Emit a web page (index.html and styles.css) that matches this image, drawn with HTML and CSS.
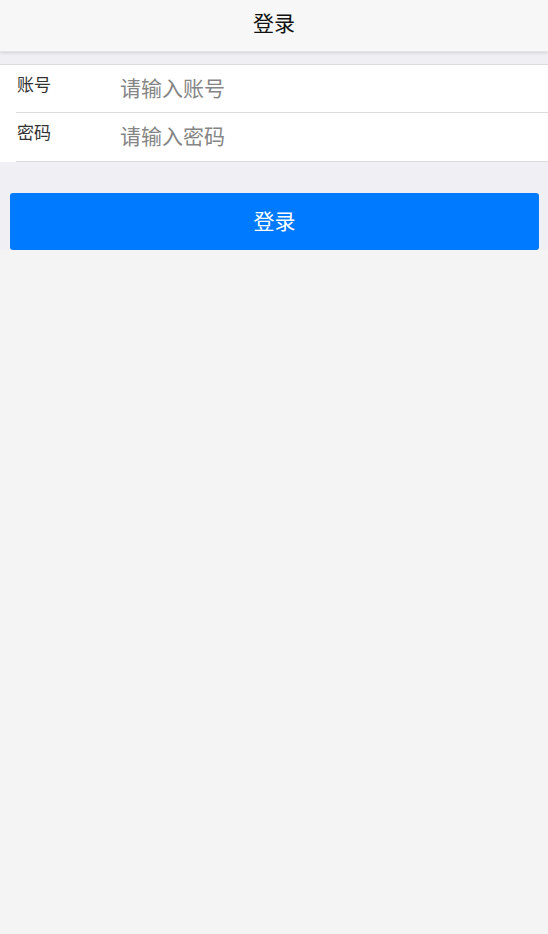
FILE: index.html
```html
<!DOCTYPE html>
<html lang="zh">
<head>
<meta charset="utf-8">
<title>登录</title>
<link rel="stylesheet" href="styles.css">
</head>
<body>
<header class="bar"><h1 class="title">登录</h1></header>
<main class="content">
  <div class="list">
    <div class="row">
      <label class="label">账号</label>
      <input class="field" type="text" placeholder="请输入账号">
    </div>
    <div class="row">
      <label class="label">密码</label>
      <input class="field" type="password" placeholder="请输入密码">
    </div>
  </div>
  <div class="actions">
    <button class="btn" type="button">登录</button>
  </div>
</main>
</body>
</html>
```
FILE: styles.css
```css
* { box-sizing: border-box; }
html, body { margin: 0; padding: 0; }
body {
  background: #f4f4f5;
  font-family: "Noto Sans CJK SC", "Noto Sans", sans-serif;
  width: 548px;
  min-height: 934px;
}
.bar {
  height: 52px;
  background: #f7f7f7;
  box-shadow: 0 1px 3px rgba(0,0,0,0.12);
  border-bottom: 1px solid #e4e4e4;
  display: flex;
  align-items: center;
  justify-content: center;
  position: relative;
  z-index: 1;
}
.title {
  margin: 0;
  font-size: 21px;
  font-weight: normal;
  color: #111;
  line-height: 1;
  transform: translateY(-3px);
}
.content {
  background: #efeff4;
  padding-top: 12px;
  padding-bottom: 0;
}
.list {
  background: #fff;
  border-top: 1px solid #dcdce0;
  padding-left: 16px;
}
.row {
  display: flex;
  height: 48px;
  border-bottom: 1px solid #dcdce0;
}
.row + .row { height: 49px; }
.label {
  width: 104px;
  font-size: 17px;
  line-height: 20px;
  padding-top: 9px;
  padding-left: 1px;
  color: #333;
}
.field {
  flex: 1;
  border: 0;
  outline: 0;
  background: transparent;
  font-family: inherit;
  font-size: 21px;
  color: #000;
  padding: 0;
  margin: 0;
  height: 43px;
}
.field::placeholder { color: #858585; }
.actions {
  padding: 31px 9px 0 10px;
}
.btn {
  display: block;
  width: 100%;
  height: 57px;
  border: 0;
  border-radius: 3px;
  background: #007aff;
  color: #fff;
  font-family: inherit;
  font-size: 21px;
  padding: 0 0 3px 0;
}
```
